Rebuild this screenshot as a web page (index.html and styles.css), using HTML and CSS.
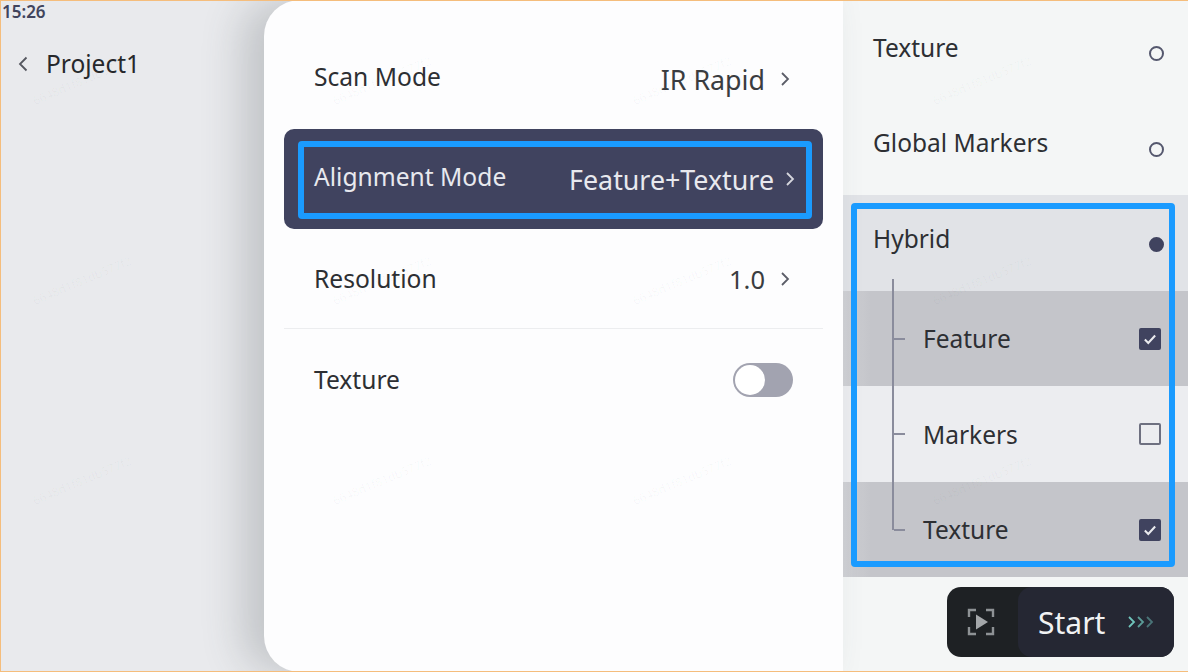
FILE: index.html
```html
<!DOCTYPE html>
<html lang="en">
<head>
  <meta charset="UTF-8">
  <meta name="viewport" content="width=device-width, initial-scale=1.0">
  <title>Project1 Scan Settings</title>
  <link rel="stylesheet" href="styles.css">
</head>
<body>
  <div class="app">
    <!-- Left: project title -->
    <aside class="side">
      <div class="clock">15:26</div>
      <div class="project">
        <svg class="back" width="12" height="18" viewBox="0 0 12 18"><path d="M9.500 2.500 3 9l6.500 6.500"/></svg>
        <span>Project1</span>
      </div>
    </aside>

    <!-- Middle: settings -->
    <main class="card">
      <div class="row">
        <span class="label">Scan Mode</span>
        <span class="value">IR Rapid <svg class="chev" width="10" height="16" viewBox="0 0 10 16"><path d="M2 2l6 6-6 6"/></svg></span>
      </div>
      <div class="row row-active">
        <span class="label">Alignment Mode</span>
        <span class="value">Feature+Texture <svg class="chev" width="10" height="16" viewBox="0 0 10 16"><path d="M2 2l6 6-6 6"/></svg></span>
        <div class="frame frame-row"></div>
      </div>
      <div class="row row-line">
        <span class="label">Resolution</span>
        <span class="value">1.0 <svg class="chev" width="10" height="16" viewBox="0 0 10 16"><path d="M2 2l6 6-6 6"/></svg></span>
      </div>
      <div class="row row-toggle">
        <span class="label">Texture</span>
        <span class="toggle"><span class="knob"></span></span>
      </div>
    </main>

    <!-- Right: alignment options -->
    <section class="options">
      <div class="opt">
        <span class="opt-name">Texture</span>
        <span class="radio"></span>
      </div>
      <div class="opt">
        <span class="opt-name">Global Markers</span>
        <span class="radio"></span>
      </div>
      <div class="group">
        <div class="opt opt-hybrid">
          <span class="opt-name">Hybrid</span>
          <span class="radio radio-on"></span>
        </div>
        <div class="opt sub sub-on">
          <span class="branch"></span>
          <span class="opt-name">Feature</span>
          <span class="check check-on"><svg width="16" height="14" viewBox="0 0 14 12"><path d="M2.500 6.500 5.500 9.500 11.500 3"/></svg></span>
        </div>
        <div class="opt sub sub-off">
          <span class="branch"></span>
          <span class="opt-name">Markers</span>
          <span class="check"></span>
        </div>
        <div class="opt sub sub-on">
          <span class="branch branch-end"></span>
          <span class="opt-name">Texture</span>
          <span class="check check-on"><svg width="16" height="14" viewBox="0 0 14 12"><path d="M2.500 6.500 5.500 9.500 11.500 3"/></svg></span>
        </div>
        <div class="frame frame-group"></div>
      </div>
      <div class="footer">
        <div class="start">
          <span class="preview">
            <svg width="28" height="28" viewBox="0 0 28 28">
              <path class="corners" d="M2 9V2h7M19 2h7v7M26 19v7h-7M9 26H2v-7"/>
              <path class="play" d="M9 6.500v15L21 14z"/>
            </svg>
          </span>
          <span class="go">
            <span class="go-text">Start</span>
            <svg width="28" height="14" viewBox="0 0 28 14">
              <path class="a1" d="M2 2l5 5-5 5"/>
              <path class="a2" d="M11 2l5 5-5 5"/>
              <path class="a3" d="M20 2l5 5-5 5"/>
            </svg>
          </span>
        </div>
      </div>
    </section>

    <!-- Watermark -->
    <div class="marks">
      <span>6648d1f81db577f2</span><span>6648d1f81db577f2</span><span>6648d1f81db577f2</span><span>6648d1f81db577f2</span>
      <span>6648d1f81db577f2</span><span>6648d1f81db577f2</span><span>6648d1f81db577f2</span><span>6648d1f81db577f2</span>
      <span>6648d1f81db577f2</span><span>6648d1f81db577f2</span><span>6648d1f81db577f2</span><span>6648d1f81db577f2</span>
    </div>
  </div>
</body>
</html>
```

FILE: styles.css
```css
* {
  box-sizing: border-box;
}

html, body {
  margin: 0;
  height: 100%;
  overflow: hidden;
}

body {
  font-family: "Noto Sans", Arial, sans-serif;
  color: #2d2f33;
}

.app {
  position: relative;
  display: flex;
  width: 1188px;
  height: 672px;
  overflow: hidden;
  background: #e9eaed;
}

/* orange edge of the screenshot */
.app::after {
  content: "";
  position: absolute;
  inset: 0;
  border: 1px solid #f5bd7c;
  border-right: none;
  z-index: 5;
}

.side {
  width: 264px;
  flex: none;
  padding: 3px 0 0 2px;
}

.clock {
  font-size: 17px;
  line-height: 18px;
  font-weight: 600;
  color: #41445c;
}

.project {
  display: flex;
  align-items: center;
  margin: 29px 0 0 15px;
  gap: 17px;
  font-size: 24.500px;
  line-height: 28px;
  color: #26282b;
}

.back {
  fill: none;
  stroke: #55575f;
  stroke-width: 1.800;
}

.card {
  position: relative;
  z-index: 2;
  width: 579px;
  flex: none;
  padding: 29px 20px 0;
  background: #fdfdfe;
  border-radius: 36px 0 0 36px;
  box-shadow: -22px 0 40px rgba(70, 80, 85, 0.24);
}

.row {
  position: relative;
  display: flex;
  align-items: center;
  justify-content: space-between;
  height: 100px;
  padding: 0 33px 0 30px;
}

.label {
  font-size: 24.600px;
  margin-bottom: 5px;
}

.value {
  display: flex;
  align-items: center;
  gap: 15px;
  font-size: 26.800px;
  color: #3a3c40;
}

.chev {
  fill: none;
  stroke: #5b5d68;
  stroke-width: 1.800;
}

.row-active {
  padding-right: 28px;
  background: #40435f;
  border-radius: 10px;
  color: #e8e9ee;
}

.row-active .value {
  gap: 11px;
  color: #e8e9ee;
}

.row-active .chev {
  stroke: #d5d6dd;
}

.row-line {
  border-bottom: 1px solid #ecedef;
}

.row-line .label {
  margin-bottom: 0;
}

.row-line .value {
  font-size: 25.500px;
}

.row-toggle {
  padding: 2px 30px 0;
}

.row-toggle .label {
  margin-bottom: 2px;
}

.toggle {
  display: block;
  width: 60px;
  height: 34px;
  padding: 2px;
  background: #a2a3b0;
  border-radius: 17px;
}

.knob {
  display: block;
  width: 30px;
  height: 30px;
  background: #fff;
  border-radius: 50%;
}

.options {
  position: relative;
  flex: 1;
  padding-top: 4px;
  background: #f4f6f6;
}

.opt {
  position: relative;
  display: flex;
  align-items: center;
  justify-content: space-between;
  height: 95.500px;
  padding: 0 24px 0 30px;
}

.opt-name {
  font-size: 24.500px;
  margin-bottom: 9px;
}

.radio {
  width: 15px;
  height: 15px;
  margin-top: 4px;
  border: 2px solid #55586e;
  border-radius: 50%;
}

.radio-on {
  background: #40435f;
  border-color: #40435f;
}

.group {
  position: relative;
  background: #e1e3e7;
}

.opt-hybrid::after {
  content: "";
  position: absolute;
  left: 49px;
  top: 84px;
  width: 2px;
  height: 12px;
  background: #8a8c9c;
}

.sub {
  padding: 1px 27px 0 80px;
}

.sub .opt-name {
  margin-bottom: 0;
}

.sub-on {
  background: linear-gradient(90deg, #d0d1d5, #c4c5ca 28px);
}

.sub-off {
  background: #ecedf0;
}

.branch {
  position: absolute;
  left: 49px;
  top: 0;
  bottom: 0;
  width: 12px;
  border-left: 2px solid #8a8c9c;
}

.branch::after {
  content: "";
  position: absolute;
  left: 0;
  top: 47px;
  width: 11px;
  height: 2px;
  background: #8a8c9c;
}

.branch-end {
  bottom: 47px;
}

.check {
  display: flex;
  align-items: center;
  justify-content: center;
  width: 22px;
  height: 22px;
  border: 2px solid #6e7080;
  border-radius: 2px;
}

.check svg {
  flex: none;
  fill: none;
  stroke: #e9eaee;
  stroke-width: 1.800;
}

.check-on {
  background: #40435f;
  border-color: #40435f;
}

.footer {
  display: flex;
  justify-content: flex-end;
  padding: 10px 14px 0 0;
}

.start {
  display: flex;
  width: 227px;
  height: 70px;
  background: #1e2124;
  border-radius: 14px;
}

.preview {
  display: flex;
  align-items: center;
  justify-content: center;
  width: 71px;
  padding-right: 3px;
}

.corners {
  fill: none;
  stroke: #8e9295;
  stroke-width: 2.400;
}

.play {
  fill: #a4a7aa;
}

.go {
  flex: 1;
  display: flex;
  align-items: center;
  gap: 22px;
  padding-left: 20px;
  background: #252733;
  border-radius: 14px;
}

.go-text {
  font-size: 30px;
  color: #f1f2f3;
}

.go svg {
  fill: none;
  stroke-width: 1.800;
}

.a1 { stroke: #6fc4bb; }
.a2 { stroke: #5b9c98; }
.a3 { stroke: #4a7478; }

.frame {
  position: absolute;
  border: 6px solid #1a9bff;
  border-radius: 4px;
  z-index: 4;
}

.frame-row {
  left: 14px;
  right: 11px;
  top: 12px;
  bottom: 10px;
}

.frame-group {
  left: 8px;
  right: 13px;
  top: 8px;
  bottom: 10px;
}

.marks {
  position: absolute;
  left: -68px;
  top: -20px;
  z-index: 3;
  display: grid;
  grid-template-columns: repeat(4, 300px);
  grid-auto-rows: 200px;
  place-items: center;
  pointer-events: none;
  font-size: 12px;
  color: rgba(60, 60, 70, 0.035);
}

.marks span {
  transform: rotate(-23deg);
}
```
